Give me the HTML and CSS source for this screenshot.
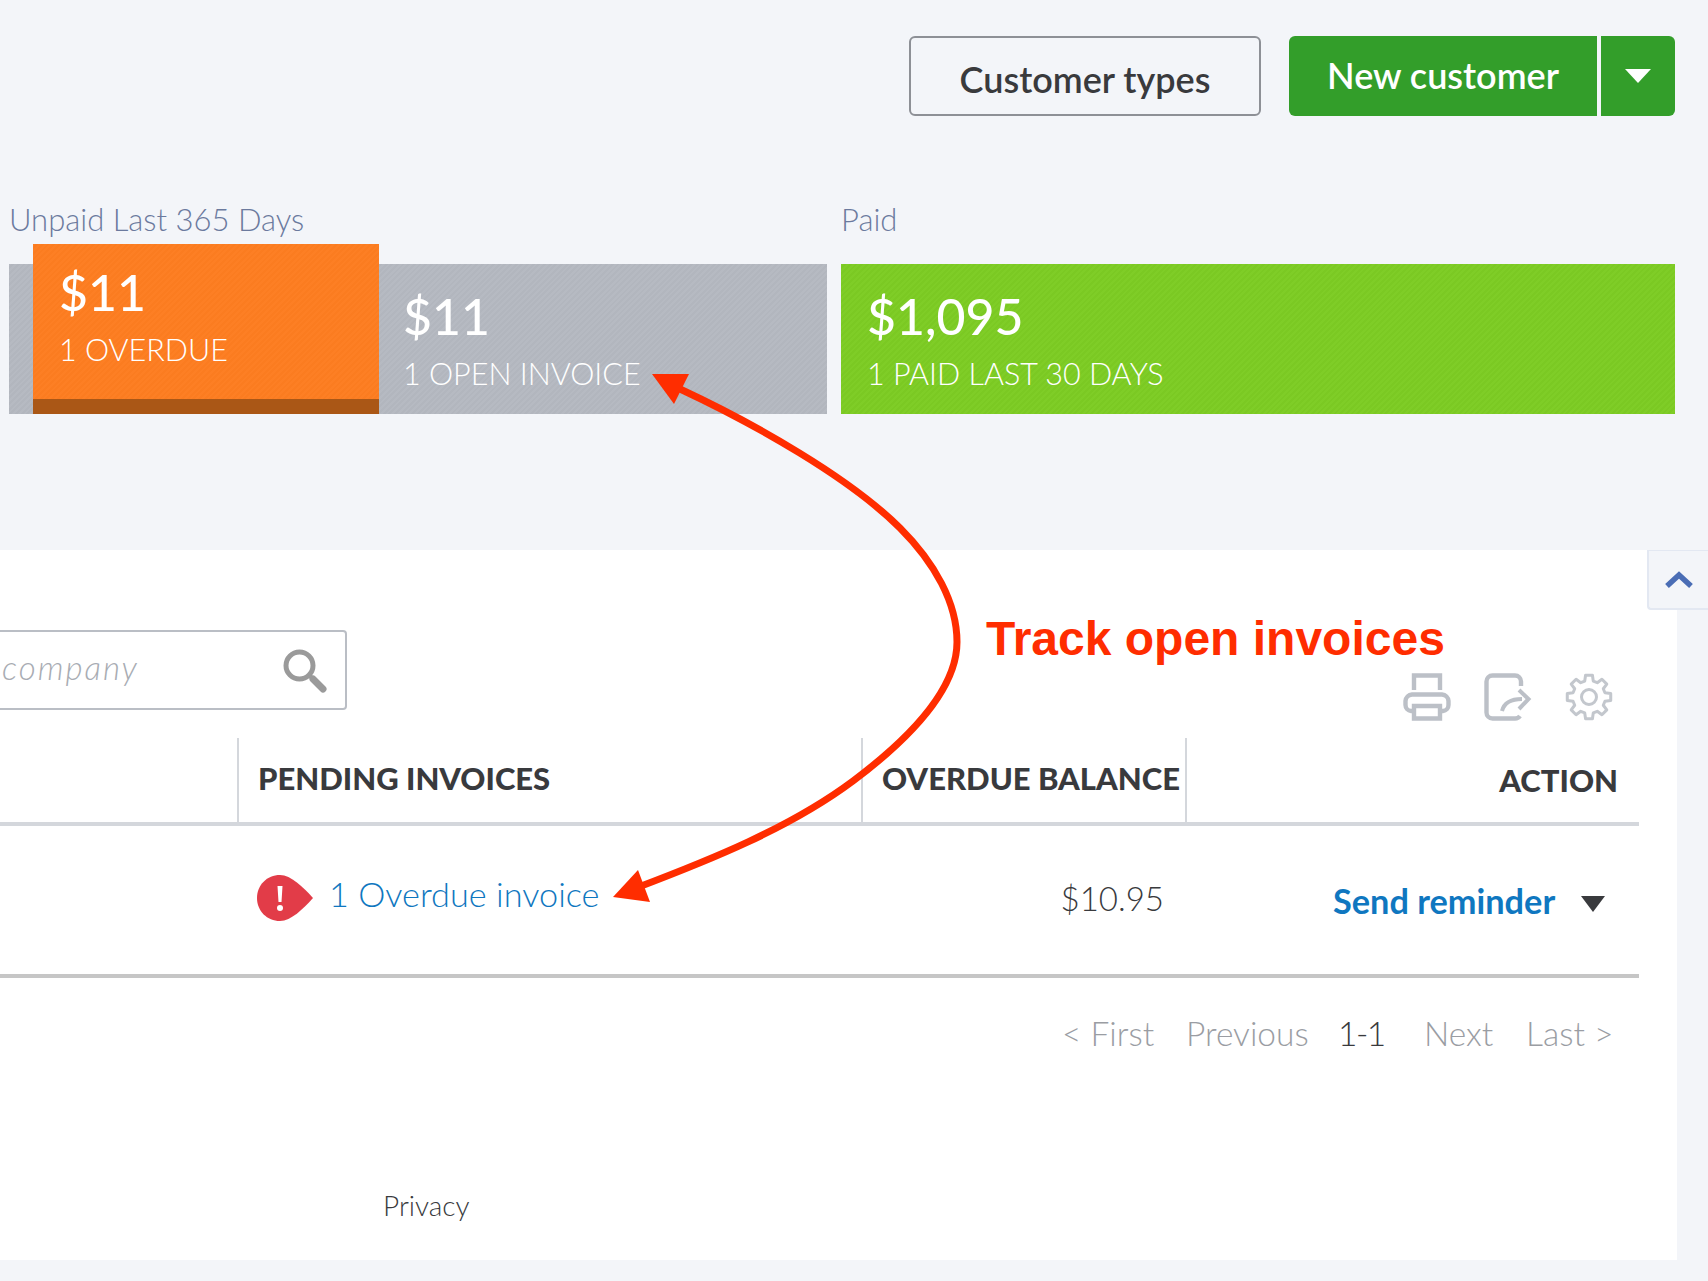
FILE: index.html
```html
<!DOCTYPE html>
<html lang="en">
<head>
<meta charset="utf-8">
<title>Customers</title>
<link rel="stylesheet" href="styles.css">
</head>
<body>
<div class="page">
  <header class="top-actions">
    <button class="btn-outline">Customer types</button>
    <div class="split">
      <button class="split-main">New customer</button>
      <button class="split-caret" aria-label="More"><span class="caret caret-white"></span></button>
    </div>
  </header>

  <section class="stats">
    <div class="stat-group">
      <div class="stat-label">Unpaid Last 365 Days</div>
      <div class="stat-bar grey">
        <div class="stat-overdue">
          <div class="stat-value">$11</div>
          <div class="stat-caption">1 OVERDUE</div>
        </div>
        <div class="stat-open">
          <div class="stat-value">$11</div>
          <div class="stat-caption">1 OPEN INVOICE</div>
        </div>
      </div>
    </div>
    <div class="stat-group">
      <div class="stat-label">Paid</div>
      <div class="stat-bar green">
        <div class="stat-paid">
          <div class="stat-value">$1,095</div>
          <div class="stat-caption">1 PAID LAST 30 DAYS</div>
        </div>
      </div>
    </div>
  </section>

  <main class="panel">
    <div class="collapse-tab">
      <svg class="chevron" viewBox="0 0 30 20"><path d="M3 15 L15 4 L27 15" fill="none" stroke="#4a6db5" stroke-width="5.5"/></svg>
    </div>

    <div class="toolbar">
      <div class="search">
        <span class="search-text">company</span>
        <svg class="search-icon" viewBox="0 0 44 44">
          <circle cx="16.5" cy="16.500" r="13.500" fill="none" stroke="#9a9a9a" stroke-width="5"/>
          <path d="M26 26 L30 30" stroke="#9a9a9a" stroke-width="4"/>
          <path d="M30 30 L40 40" stroke="#9a9a9a" stroke-width="7" stroke-linecap="round"/>
        </svg>
      </div>
      <div class="tools">
        <svg class="tool" viewBox="0 0 48 48" fill="none" stroke="#bcc0c7" stroke-width="4.400">
          <path d="M11 17 V2.500 H37 V17"/>
          <path d="M11 38 H8 A6 6 0 0 1 2.500 32 V28 A7 7 0 0 1 9 21.500 H39 A7 7 0 0 1 45.500 28 V32 A6 6 0 0 1 40 38 H37"/>
          <path d="M11 45.500 V33 H37 V45.500 Z"/>
        </svg>
        <svg class="tool" viewBox="0 0 48 48" fill="none" stroke="#bcc0c7" stroke-width="4.400">
          <path d="M37 13 V8.500 A6 6 0 0 0 31 2.500 H8.500 A6 6 0 0 0 2.500 8.500 V39.500 A6 6 0 0 0 8.500 45.500 H31 A6 6 0 0 0 36 43"/>
          <path d="M18 38 C20 30 27 26 38 26" stroke-width="4"/>
          <path d="M35 17 L44.500 26 L35 36" stroke-width="4"/>
        </svg>
        <svg class="tool" viewBox="0 0 48 48" fill="none" stroke="#c3c7cd" stroke-width="3" stroke-linejoin="round">
          <polygon points="19.730,8.060 20.560,2.270 27.440,2.270 28.270,8.060 32.250,9.710 36.930,6.200 41.800,11.070 38.290,15.750 39.940,19.730 45.730,20.560 45.730,27.440 39.940,28.270 38.290,32.250 41.800,36.930 36.930,41.800 32.250,38.290 28.270,39.940 27.440,45.730 20.560,45.730 19.730,39.940 15.750,38.290 11.070,41.800 6.200,36.930 9.710,32.250 8.060,28.270 2.270,27.440 2.270,20.560 8.060,19.730 9.710,15.750 6.200,11.070 11.070,6.200 15.750,9.710"/>
          <circle cx="24" cy="24" r="7.500"/>
        </svg>
      </div>
    </div>

    <div class="table-wrap">
      <div class="table-head">
        <div class="th th-blank"></div>
        <div class="th th-pending">PENDING INVOICES</div>
        <div class="th th-balance">OVERDUE BALANCE</div>
        <div class="th th-action">ACTION</div>
      </div>
      <div class="table-row">
        <div class="td td-blank"></div>
        <div class="td td-pending">
          <svg class="alert" viewBox="0 0 56 46">
            <path d="M23 0 C34 0 46 12 56 23 C46 34 34 46 23 46 C10 46 0 36 0 23 C0 10 10 0 23 0 Z" fill="#e23c48"/>
            <path d="M20.500 11 H25.500 L24.500 27 H21.500 Z" fill="#fff"/>
            <circle cx="23" cy="33" r="3" fill="#fff"/>
          </svg>
          <a class="link-overdue">1 Overdue invoice</a>
        </div>
        <div class="td td-balance">$10.95</div>
        <div class="td td-action">
          <a class="link-send">Send reminder</a>
          <span class="caret caret-dark"></span>
        </div>
      </div>
    </div>

    <nav class="pager">
      <span class="pg pg-first">&lt; First</span>
      <span class="pg pg-prev">Previous</span>
      <span class="pg pg-cur">1-1</span>
      <span class="pg pg-next">Next</span>
      <span class="pg pg-last">Last &gt;</span>
    </nav>

    <footer class="foot">Privacy</footer>
  </main>

  <div class="note">Track open invoices</div>

  <svg class="annotation" viewBox="0 0 1708 1281" aria-hidden="true">
    <path d="M680 389 C 755 424, 850 478, 900 528 C 935 563, 957 603, 957 642 C 957 692, 905 742, 853 781 C 790 828, 710 860, 636 888" fill="none" stroke="#ff2d00" stroke-width="7"/>
    <polygon points="652,374 689,374 674,404" fill="#ff2d00"/>
    <polygon points="613,897 638,870 650,902" fill="#ff2d00"/>
  </svg>
</div>
</body>
</html>
```

FILE: styles.css
```css
* { box-sizing: border-box; }
html, body { margin: 0; padding: 0; }
body { background: #f3f5f9; font-family: Lato, "Open Sans", sans-serif; color: #393a3d; }
.page { position: relative; width: 1708px; height: 1281px; overflow: hidden; }

.top-actions { display: flex; justify-content: flex-end; gap: 28px; padding: 36px 33px 0 0; height: 116px; }
button { font-family: inherit; cursor: pointer; }
.btn-outline { width: 352px; height: 80px; background: transparent; border: 2px solid #8d9096; border-radius: 6px; font-size: 36px; font-weight: 600; color: #393a3d; padding: 6px 0 0; }
.split { display: flex; gap: 4px; background: #f3f5f9; }
.split-main { width: 308px; height: 80px; background: #339e2a; border: 0; border-radius: 6px 0 0 6px; color: #fff; font-size: 36px; font-weight: 600; padding: 0 0 2px; }
.split-caret { width: 74px; height: 80px; background: #339e2a; border: 0; border-radius: 0 6px 6px 0; display: flex; align-items: center; justify-content: center; padding: 0; }
.caret { display: block; width: 0; height: 0; border-style: solid; border-color: transparent; }
.caret-white { border-width: 14px 13px 0; border-top-color: #fff; }
.caret-dark { border-width: 16px 12px 0; border-top-color: #393a3d; }

.stats { display: grid; grid-template-columns: 818px 834px; gap: 14px; padding: 71px 0 0 9px; }
.stat-label { font-size: 31px; font-weight: 300; color: #6b7a9e; line-height: 64px; height: 77px; }
.stat-bar { position: relative; height: 150px; color: #fff; }
.grey { background: repeating-linear-gradient(135deg, #b6bac2 0 2px, #b2b6be 2px 4px); display: flex; }
.green { background: repeating-linear-gradient(135deg, #7fcd27 0 2px, #7bc923 2px 4px); }
.stat-overdue { width: 346px; height: 170px; margin: -20px 0 0 24px; padding: 20px 0 0 26px; background: repeating-linear-gradient(135deg, #fd7f24 0 2px, #fb7c20 2px 4px); border-bottom: 15px solid #aa5716; }
.stat-open { padding: 24px 0 0 24px; }
.stat-paid { padding: 24px 0 0 26px; }
.stat-value { font-size: 50px; line-height: 56px; font-weight: 500; }
.stat-caption { font-size: 30.5px; font-weight: 300; line-height: 40px; margin-top: 9px; }

.panel { position: relative; width: 1677px; height: 710px; margin-top: 136px; background: #fff; }
.collapse-tab { position: absolute; left: 1647px; top: 0; width: 61px; height: 60px; background: #f3f5f9; border: 2px solid #e3e8f2; border-top-width: 1px; border-right: 0; border-radius: 0 0 0 4px; display: flex; align-items: center; justify-content: center; padding: 3px 0 0; }
.chevron { width: 30px; height: 20px; }

.toolbar { display: flex; justify-content: space-between; align-items: flex-start; height: 188px; padding: 80px 64px 0 0; }
.search { width: 347px; height: 80px; border: 2px solid #babec5; border-left: 0; border-radius: 0 4px 4px 0; display: flex; align-items: center; justify-content: space-between; padding: 0 18px 0 2px; }
.search-text { font-size: 33px; letter-spacing: 2px; font-style: italic; font-weight: 300; color: #a8acb3; margin-top: -6px; }
.search-icon { width: 44px; height: 44px; margin-top: 2px; }
.tools { display: flex; gap: 33px; padding: 43px 0 0 0; }
.tool { width: 48px; height: 48px; }

.table-wrap { width: 1639px; }
.table-head { display: grid; grid-template-columns: 237px 624px 324px 454px; height: 88px; border-bottom: 4px solid #d4d7dc; }
.th { font-size: 31px; font-weight: 900; color: #393a3d; display: flex; align-items: center; border-left: 2px solid #d4d7dc; padding: 0 0 4px 19px; white-space: nowrap; }
.th-blank { border-left: 0; }
.th-action { justify-content: flex-end; padding: 0 21px 0 0; }
.table-row { display: grid; grid-template-columns: 237px 624px 324px 454px; height: 152px; border-bottom: 4px solid #c6c6c6; align-items: center; }
.td-pending { display: flex; align-items: center; gap: 16px; padding: 0 0 4px 20px; }
.alert { width: 56px; height: 46px; }
.link-overdue { font-size: 34.3px; font-weight: 300; color: #0f77c0; margin-top: -9px; }
.td-balance { text-align: right; font-size: 33px; font-weight: 300; padding: 0 21px 4px 0; }
.td-action { display: flex; align-items: center; padding: 0 0 0 148px; }
.link-send { font-size: 34.3px; font-weight: 700; color: #0f77c0; }
.caret-dark { margin: 8px 0 0 26px; }

.pager { display: flex; width: 1639px; height: 110px; padding: 35px 0 0 1062px; font-size: 33.500px; font-weight: 300; color: #9a9da3; }
.pg-first { width: 124px; }
.pg-prev { width: 152px; }
.pg-cur { width: 86px; color: #393a3d; letter-spacing: -1.500px; }
.pg-next { width: 102px; }
.foot { padding: 100px 0 0 383px; font-size: 28px; font-weight: 300; color: #393a3d; }

.note { position: absolute; left: 986px; top: 610px; font-family: "Liberation Sans", Arial, sans-serif; font-weight: 700; font-size: 48px; line-height: 58px; color: #ff2d00; white-space: nowrap; }
.annotation { position: absolute; left: 0; top: 0; width: 1708px; height: 1281px; pointer-events: none; }
```
